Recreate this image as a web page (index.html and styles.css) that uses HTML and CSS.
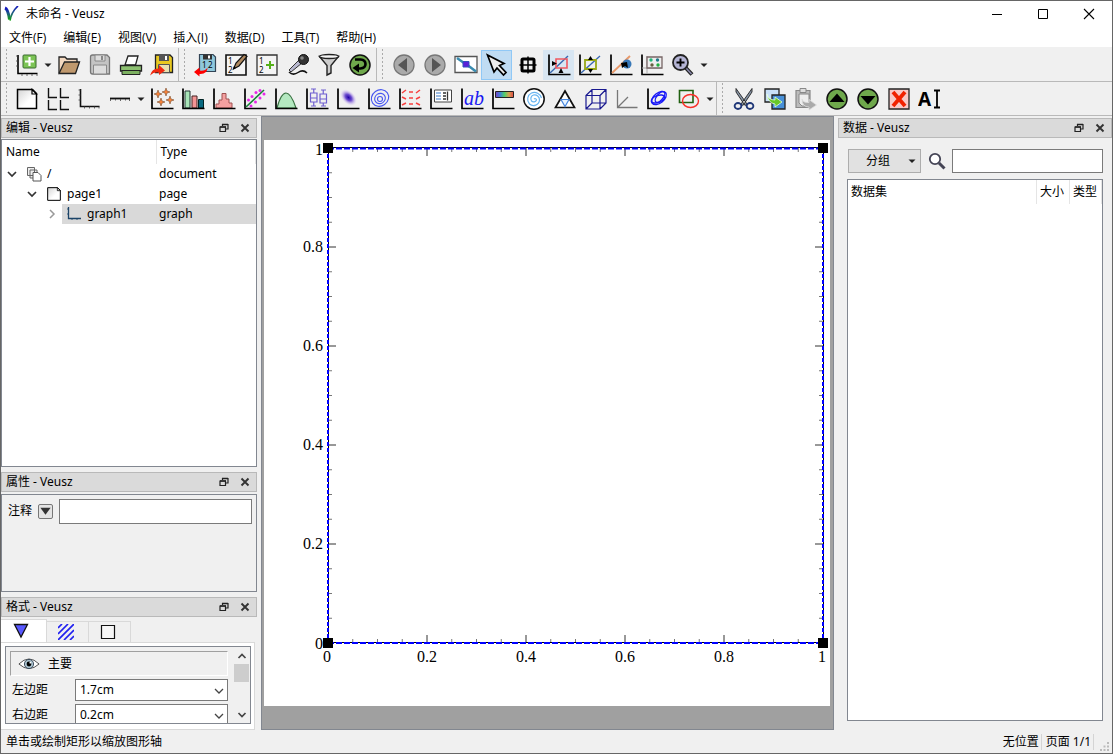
FILE: index.html
```html
<!DOCTYPE html>
<html lang="zh-CN">
<head>
<meta charset="utf-8">
<title>未命名 - Veusz</title>
<link rel="stylesheet" href="styles.css">
</head>
<body>
<svg class="defs" aria-hidden="true">
  <defs>
    <linearGradient id="spectrum"><stop offset="0" stop-color="#7a3fc0"/><stop offset=".25" stop-color="#3f7fd8"/><stop offset=".5" stop-color="#4fd06a"/><stop offset=".75" stop-color="#d8a050"/><stop offset="1" stop-color="#e04848"/></linearGradient>
    <linearGradient id="paper" x1="0" y1="0" x2="1" y2="1"><stop offset="0" stop-color="#d4d4d4"/><stop offset=".6" stop-color="#fff"/></linearGradient>
    <linearGradient id="logo" x1="0" y1="0" x2="0" y2="1"><stop offset="0" stop-color="#1010c0"/><stop offset=".5" stop-color="#206080"/><stop offset="1" stop-color="#10a010"/></linearGradient>
    <radialGradient id="blob"><stop offset="0" stop-color="#2200a8"/><stop offset=".4" stop-color="#7050d0"/><stop offset="1" stop-color="#e8d8f8" stop-opacity="0"/></radialGradient>
    <symbol id="axes" viewBox="0 0 24 24"><path d="M2 1.500V21.500H23.500" fill="none" stroke="#000" stroke-width="1.700"/></symbol>
    <symbol id="float" viewBox="0 0 10 10"><path d="M3.500 3V1.500H9V6H7M1 4H6.500V8.500H1Z" fill="none" stroke="#222" stroke-width="1.200"/><path d="M1 4h6M3 1.500h6" stroke="#222" stroke-width="1.500"/></symbol>
    <symbol id="close" viewBox="0 0 10 10"><path d="M1.500 1.500L8.500 8.500M8.500 1.500L1.500 8.500" stroke="#333" stroke-width="1.900"/></symbol>
    <symbol id="chev" viewBox="0 0 10 10"><path d="M1 3l4 4 4-4" fill="none" stroke="currentColor" stroke-width="1.300"/></symbol>
    <symbol id="down" viewBox="0 0 10 10"><path d="M1.500 3.500h7L5 7Z" fill="#222"/></symbol>
    <symbol id="page" viewBox="0 0 24 24"><path d="M2.500 2.500H17.500L21.500 6.500V21.500H2.500Z" fill="url(#paper)" stroke="#000" stroke-width="1.500"/><path d="M17 2.500V7H21.500Z" fill="#fff" stroke="#000" stroke-width="1.200"/></symbol>
  </defs>
</svg>
<div class="window">
  <header class="titlebar">
    <svg class="logo" viewBox="0 0 16 16"><path d="M1 2Q4 3 5.500 13.500" fill="none" stroke="url(#logo)" stroke-width="3"/><path d="M6 14.500Q7.500 6 14 0" fill="none" stroke="url(#logo)" stroke-width="1.700"/></svg>
    <h1>未命名 - Veusz</h1>
    <div class="caption">
      <button aria-label="最小化"><svg viewBox="0 0 12 12"><path d="M1 6.500H11" stroke="#000"/></svg></button>
      <button aria-label="最大化"><svg viewBox="0 0 12 12"><path d="M1.500 1.500H10.500V10.500H1.500Z" fill="none" stroke="#000"/></svg></button>
      <button aria-label="关闭"><svg viewBox="0 0 12 12"><path d="M1 1L11 11M11 1L1 11" stroke="#000" stroke-width="1.100"/></svg></button>
    </div>
  </header>
  <nav class="menubar">
    <button>文件(F)</button><button>编辑(E)</button><button>视图(V)</button><button>插入(I)</button><button>数据(D)</button><button>工具(T)</button><button>帮助(H)</button>
  </nav>

  <div class="toolrow">
    <div class="tools">
      <button class="tool" aria-label="新建"><svg viewBox="0 0 24 24"><path d="M3 2V20.500H22.500" fill="none" stroke="#000" stroke-width="1.600"/><path d="M1 3h2M1 8h2M1 13h2M7 21v2M12 21v2M17 21v2M22 21v2" stroke="#444" stroke-width=".8"/><rect x="8" y="2" width="13" height="13" rx="1" fill="#7cc455" stroke="#3a6a30"/><path d="M14.500 4v9M10 8.500h9" stroke="#fff" stroke-width="2.200"/></svg></button>
      <button class="drop" aria-label="新建选项"><svg viewBox="0 0 10 10"><use href="#down"/></svg></button>
      <button class="tool" aria-label="打开"><svg viewBox="0 0 24 24"><path d="M2 20V4H8L10 6H20V9" fill="#f4d9c0" stroke="#222" stroke-width="1.300"/><path d="M2 20.500L7.500 9H22.500L18.500 20.500Z" fill="#c0996e" stroke="#222" stroke-width="1.300"/></svg></button>
      <button class="tool" aria-label="保存"><svg viewBox="0 0 24 24"><path d="M2.500 4Q2.500 2 4.500 2H19L21.500 4.500V21H4.500Q2.500 21 2.500 19Z" fill="#c4c4c4" stroke="#777" stroke-width="1.300"/><path d="M7 2h10v6H7ZM5.500 12h13v9h-13Z" fill="#ddd" stroke="#888"/><path d="M13 3h2v4h-2Z" fill="#888"/></svg></button>
      <button class="tool" aria-label="打印"><svg viewBox="0 0 24 24"><path d="M6 12L9 3H19L16.500 12Z" fill="#fff" stroke="#222" stroke-width="1.300"/><path d="M1.500 12.500H22.500V18H1.500Z" fill="#8cc070" stroke="#222" stroke-width="1.300"/><path d="M3 17.500h18v4H3Z" fill="#7cb060" stroke="#222"/></svg></button>
      <button class="tool" aria-label="导出"><svg viewBox="0 0 24 24"><path d="M5.500 2H20L22.500 4.500V19.500H5.500Z" fill="#e8c820" stroke="#222" stroke-width="1.300"/><path d="M9 2h10v6H9Z" fill="#555"/><path d="M15 3h2v4h-2Z" fill="#fff"/><path d="M8.500 11.500h11v8h-11Z" fill="#e8e0b0" stroke="#555"/><path d="M0 22.500Q2 15 9 15.500V12L15 17.500L9 22V19.500Q4 18.500 0 22.500Z" fill="#f02810"/></svg></button>
    </div>
    <div class="tools">
      <button class="tool" aria-label="链接数据"><svg viewBox="0 0 24 24"><path d="M6.500 1.500H20L22.500 4V18.500H6.500Z" fill="#8fc8dc" stroke="#345" stroke-width="1.200"/><path d="M10 1.500h9v5h-9Z" fill="#333"/><path d="M15 2.500h2v3h-2Z" fill="#fff"/><text x="9" y="15" font-size="8">1</text><text x="15" y="15" font-size="8">2</text><path d="M1 19L6.500 14.500V17.500Q12 18.500 14.500 14.500Q14.500 21.500 6.500 21V23.500Z" fill="#f00"/></svg></button>
      <button class="tool" aria-label="编辑数据"><svg viewBox="0 0 24 24"><path d="M2 2h20v20H2Z" fill="#f4f4f4" stroke="#111" stroke-width="1.600"/><text x="4" y="11" font-size="8">1</text><text x="4" y="20" font-size="8">2</text><path d="M9.500 16L12 10L20 1.500L23 3.500L15 13Z" fill="#b08a60" stroke="#111" stroke-width="1.200"/><path d="M9 16.500l3-1.500-2-2Z"/></svg></button>
      <button class="tool" aria-label="创建数据"><svg viewBox="0 0 24 24"><path d="M2 2h20v20H2Z" fill="#f4f4f4" stroke="#333" stroke-width="1.300"/><text x="4" y="10.500" font-size="8">1</text><text x="4" y="19.500" font-size="8">2</text><path d="M15 8v8M11 12h8" stroke="#54b018" stroke-width="2"/></svg></button>
      <button class="tool" aria-label="捕获数据"><svg viewBox="0 0 24 24"><path d="M3 17L13 7L16 10L5 19Z" fill="#b8b8d0" stroke="#333"/><circle cx="17.500" cy="6.500" r="5" fill="#333" stroke="#111"/><circle cx="16" cy="5" r="1.800" fill="#888"/><path d="M3 19Q7 23 12 19.500T21 20" fill="none" stroke="#111" stroke-width="1.500"/></svg></button>
      <button class="tool" aria-label="筛选数据"><svg viewBox="0 0 24 24"><path d="M2.500 3.500L10 12.500V22L14 20V12.500L21.500 3.500Z" fill="#ccc" stroke="#222" stroke-width="1.400"/><ellipse cx="12" cy="3.500" rx="9.500" ry="2" fill="#f6f6f6" stroke="#222" stroke-width="1.300"/></svg></button>
      <button class="tool" aria-label="重新加载"><svg viewBox="0 0 24 24"><circle cx="12" cy="12" r="10" fill="#6fa84c" stroke="#111" stroke-width="1.500"/><path d="M7 6.500H12.500Q17.500 7 17.500 11T12.500 15.500H10" fill="none" stroke="#000" stroke-width="2.600"/><path d="M4.500 15L11 10.500V19.500Z"/></svg></button>
    </div>
    <div class="tools last">
      <button class="tool" aria-label="上一页"><svg viewBox="0 0 24 24"><circle cx="12" cy="12" r="10" fill="#aaa" stroke="#777" stroke-width="1.300"/><path d="M15 5V19L6 12Z" fill="#555"/></svg></button>
      <button class="tool" aria-label="下一页"><svg viewBox="0 0 24 24"><circle cx="12" cy="12" r="10" fill="#aaa" stroke="#777" stroke-width="1.300"/><path d="M9 5V19L18 12Z" fill="#555"/></svg></button>
      <button class="tool" aria-label="全屏"><svg viewBox="0 0 24 24"><path d="M1 3.500h22v16H1Z" fill="#fff" stroke="#555" stroke-width="1.300"/><path d="M3 5l7 5M14 12.500l8 6" stroke="#3a8cb0" stroke-width="2.500"/><path d="M9 8.500h6v5.500H9Z" fill="#5a20d8" stroke="#3050c0"/></svg></button>
      <button class="tool on" aria-label="选择"><svg viewBox="0 0 24 24"><path d="M2.500 2L19 10.500L14.500 12.500L21 19.500L18.500 22L12 15L9 19Z" fill="#eee" stroke="#000" stroke-width="1.700"/></svg></button>
      <button class="tool" aria-label="读取坐标"><svg viewBox="0 0 24 24"><rect x="6" y="6" width="12" height="12" rx="1" fill="none" stroke="#000" stroke-width="3"/><path d="M12 3.500v17M3.500 12h17" stroke="#000" stroke-width="1.500"/></svg></button>
      <button class="tool soft" aria-label="缩放坐标轴"><svg viewBox="0 0 24 24"><use href="#axes"/><path d="M3 20L21 3" stroke="#3868b0" stroke-width="1.400"/><path d="M9 6h11v9H9Z" fill="none" stroke="#f05860" stroke-width="1.600"/><path d="M5 8l5 2.500-5 2.500ZM14 15l2.500 5h-5Z"/></svg></button>
      <button class="tool" aria-label="重新居中"><svg viewBox="0 0 24 24"><use href="#axes"/><path d="M3 20L22 3" stroke="#3868b0" stroke-width="1.400"/><path d="M7 7h11v9H7Z" fill="none" stroke="#98a818" stroke-width="1.800"/><path d="M12.500 3l2.500 4h-5ZM12.500 20l2.500-4h-5Z"/></svg></button>
      <button class="tool" aria-label="移动"><svg viewBox="0 0 24 24"><use href="#axes"/><path d="M3 20L21 3" stroke="#e89868" stroke-width="1.800"/><circle cx="18" cy="11" r="4.500" fill="#3878b8"/><path d="M12 10l6-1 1 6-3-2-3 2Z"/></svg></button>
      <button class="tool" aria-label="重置"><svg viewBox="0 0 24 24"><use href="#axes"/><path d="M2 15H22M7 3V21" stroke="#aaa"/><path d="M7 4h15v11H7Z" fill="#eee" stroke="#766" stroke-width="1.300"/><circle cx="11" cy="7" r="1.700" fill="#20b878"/><circle cx="17.500" cy="7" r="1.700" fill="#20788a"/><circle cx="12" cy="12" r="1.700" fill="#686040"/><circle cx="18" cy="12" r="1.700" fill="#20b040"/></svg></button>
      <button class="tool" aria-label="放大"><svg viewBox="0 0 24 24"><path d="M14 14L21 21.500" stroke="#222" stroke-width="4"/><path d="M15 15L20.500 21" stroke="#88a" stroke-width="1.600"/><circle cx="9.500" cy="9.500" r="7.500" fill="#b4b4d4" stroke="#222" stroke-width="1.800"/><path d="M9.500 5.500v8M5.500 9.500h8" stroke="#000" stroke-width="1.900"/></svg></button>
      <button class="drop" aria-label="缩放选项"><svg viewBox="0 0 10 10"><use href="#down"/></svg></button>
    </div>
  </div>

  <div class="toolrow">
    <div class="tools">
      <button class="tool" aria-label="页面"><svg viewBox="0 0 24 24"><use href="#page"/></svg></button>
      <button class="tool" aria-label="网格"><svg viewBox="0 0 24 24"><path d="M2.500 1V10.500H11M14.500 1V10.500H23M2.500 13V22.500H11M14.500 13V22.500H23" fill="none" stroke="#111" stroke-width="1.400"/></svg></button>
      <button class="tool" aria-label="图形"><svg viewBox="0 0 24 24"><path d="M3.500 2V19.500H22.500" fill="none" stroke="#111" stroke-width="1.600"/><path d="M1.500 3h2M1.500 8h2M1.500 13h2M7.500 19.500v2M12.500 19.500v2M17.500 19.500v2M22 19.500v2" stroke="#444" stroke-width=".8"/></svg></button>
      <button class="tool" aria-label="坐标轴"><svg viewBox="0 0 24 24"><path d="M2 11.500H22" stroke="#111" stroke-width="1.800"/><path d="M2.500 12v2M7.500 12v1.500M12.500 12v2M17.500 12v1.500M21.500 12v2" stroke="#444" stroke-width=".8"/></svg></button>
      <button class="drop" aria-label="坐标轴选项"><svg viewBox="0 0 10 10"><use href="#down"/></svg></button>
      <button class="tool" aria-label="散点"><svg viewBox="0 0 24 24"><use href="#axes"/><g fill="#f88038" stroke="#7a5030" stroke-width=".6"><path id="star" d="M8 3l1 3 3 1-3 1-1 3-1-3-3-1 3-1Z"/><use href="#star" x="8" y="-2"/><use href="#star" x="3" y="8"/><use href="#star" x="12" y="6"/></g></svg></button>
      <button class="tool" aria-label="柱形图"><svg viewBox="0 0 24 24"><path d="M4 4h5v17H4Z" fill="#a8e4b8" stroke="#233"/><path d="M11 9h5v12h-5Z" fill="#f49494" stroke="#422"/><path d="M17.500 12.500h5V21h-5Z" fill="#086880" stroke="#022"/><use href="#axes"/></svg></button>
      <button class="tool" aria-label="直方图"><svg viewBox="0 0 24 24"><path d="M4 21V17H7V13H10V6.500H14V12H17V16H20V21Z" fill="#f4a0a0" stroke="#a05050"/><use href="#axes"/></svg></button>
      <button class="tool" aria-label="拟合"><svg viewBox="0 0 24 24"><use href="#axes"/><path d="M3 20L21 3" stroke="#188038" stroke-width="1.600"/><g fill="#e828e8"><circle cx="5.500" cy="13" r="1.500"/><circle cx="9" cy="9.500" r="1.500"/><circle cx="13" cy="5.500" r="1.500"/><circle cx="17" cy="3.500" r="1.500"/><circle cx="8" cy="19" r="1.500"/><circle cx="12.500" cy="15" r="1.500"/><circle cx="17" cy="11" r="1.500"/><circle cx="21" cy="7" r="1.500"/></g></svg></button>
      <button class="tool" aria-label="函数"><svg viewBox="0 0 24 24"><path d="M3 21Q7 6 12 6T22 21Z" fill="#b4e8c0" stroke="#387040" stroke-width="1.200"/><use href="#axes"/></svg></button>
      <button class="tool" aria-label="箱线图"><svg viewBox="0 0 24 24"><use href="#axes"/><path d="M5.500 6h6.500v9H5.500ZM15 7h6.500v9H15ZM8.750 2v4M8.750 15v4M18.250 3v4M18.250 16v3M6 2h5M6 19h5M16 3h5M16 19h5M5.500 11H12M15 12h6.500" fill="none" stroke="#7060d0" stroke-width="1.200"/></svg></button>
      <button class="tool" aria-label="图像"><svg viewBox="0 0 24 24"><use href="#axes"/><ellipse cx="12.500" cy="10.500" rx="10" ry="6.500" fill="url(#blob)" transform="rotate(45 12.500 10.500)"/></svg></button>
      <button class="tool" aria-label="等高线"><svg viewBox="0 0 24 24"><use href="#axes"/><g fill="none" stroke="#4858f0" stroke-width="1.100"><ellipse cx="13" cy="11" rx="9" ry="8" transform="rotate(-35 13 11)"/><ellipse cx="13" cy="11.500" rx="5.500" ry="5" transform="rotate(-35 13 11.500)"/><circle cx="13" cy="12" r="2.500"/></g></svg></button>
      <button class="tool" aria-label="矢量场"><svg viewBox="0 0 24 24"><use href="#axes"/><path d="M4 6l4-3M11 5h4M18 6l4-3M4 10l4 2M11 11h4M18 12l4-2M4 18l4-2M11 17h4M18 16l4 2" stroke="#f84040" stroke-width="1.500"/></svg></button>
      <button class="tool" aria-label="图例"><svg viewBox="0 0 24 24"><use href="#axes"/><path d="M5.500 3h17v12h-17Z" fill="#fff" stroke="#444"/><path d="M7 6h5M7 9h5M7 12h5" stroke="#3878c8"/><path d="M14 6h3M14 9h3M14 12h3M18.500 4.500v9" stroke="#333" stroke-width="1.300"/></svg></button>
      <button class="tool" aria-label="标签"><svg viewBox="0 0 24 24"><use href="#axes"/><text class="ab" x="4" y="18" font-size="20">ab</text></svg></button>
      <button class="tool" aria-label="色条"><svg viewBox="0 0 24 24"><use href="#axes"/><path d="M4.500 4.500h18v6h-18Z" fill="url(#spectrum)" stroke="#222"/></svg></button>
      <button class="tool" aria-label="极坐标"><svg viewBox="0 0 24 24"><circle cx="12" cy="12" r="10.200" fill="#fff" stroke="#111" stroke-width="1.500"/><path d="M12 12a1.500 1.500 0 0 1 2.500 1a3 3 0 0 1-5 1a4 4 0 0 1 2-6a5 5 0 0 1 6 5a6 6 0 0 1-10 4a7 7 0 0 1 2-11a7.500 7.500 0 0 1 10 5" fill="none" stroke="#68b4f0" stroke-width="1.200"/></svg></button>
      <button class="tool" aria-label="三元图"><svg viewBox="0 0 24 24"><path d="M12 4L21.500 20.500H2.500Z" fill="#fff" stroke="#111" stroke-width="1.700"/><path d="M8 12.500h8L12 19.500Z" fill="#e8f4ff" stroke="#4888e0" stroke-width="1.200"/></svg></button>
      <button class="tool" aria-label="三维场景"><svg viewBox="0 0 24 24"><path d="M2 8.500H16V22H2ZM2 8.500L8 2.500H22V16L16 22M16 8.500L22 2.500M8 2.500V16H22M8 16L2 22" fill="none" stroke="#181890" stroke-width="1.200"/></svg></button>
      <button class="tool" aria-label="三维图形"><svg viewBox="0 0 24 24"><path d="M2.500 3V20.500H22.500M2.500 20.500L13 10" fill="none" stroke="#777" stroke-width="1.300"/></svg></button>
      <button class="tool" aria-label="协方差"><svg viewBox="0 0 24 24"><use href="#axes"/><g fill="none" stroke="#1818f8" stroke-width="1.400"><ellipse cx="13" cy="11" rx="8.500" ry="5" transform="rotate(-38 13 11)"/><ellipse cx="14" cy="10" rx="6.500" ry="3" transform="rotate(-50 14 10)"/><ellipse cx="12" cy="12" rx="7" ry="3.500" transform="rotate(-20 12 12)"/></g></svg></button>
      <button class="tool" aria-label="形状"><svg viewBox="0 0 24 24"><path d="M2.500 3.500H16V15.500H2.500Z" fill="none" stroke="#206010" stroke-width="1.600"/><ellipse cx="13.500" cy="14" rx="8" ry="6.500" fill="none" stroke="#f83028" stroke-width="1.400"/></svg></button>
      <button class="drop" aria-label="形状选项"><svg viewBox="0 0 10 10"><use href="#down"/></svg></button>
    </div>
    <div class="tools last">
      <button class="tool" aria-label="剪切"><svg viewBox="0 0 24 24"><path d="M4 1.500L15 17L13 18.500L4 5ZM20 1.500L9 17L11 18.500L20 5Z" fill="#8896a8" stroke="#222" stroke-width=".9"/><ellipse cx="6" cy="19" rx="3.400" ry="3" fill="none" stroke="#203878" stroke-width="1.800"/><ellipse cx="18" cy="19" rx="3.400" ry="3" fill="none" stroke="#203878" stroke-width="1.800"/></svg></button>
      <button class="tool" aria-label="复制"><svg viewBox="0 0 24 24"><path d="M2 2h14v13H2Z" fill="#c8e0f8" stroke="#222" stroke-width="1.300"/><path d="M9 8h13v14H9Z" fill="#4890d8" stroke="#222" stroke-width="1.300"/><path d="M4 7Q5 13 12 13V10L19 15L12 20V17Q5 16 4 7Z" fill="#68c828" stroke="#e8ffe0" stroke-width=".8"/></svg></button>
      <button class="tool" aria-label="粘贴"><svg viewBox="0 0 24 24"><path d="M2 3.500h14v17H2Z" fill="#bbb" stroke="#888" stroke-width="1.200"/><path d="M6 1.500h6v4H6Z" fill="#ddd" stroke="#888"/><path d="M5 7h10v12H8L5 16Z" fill="#eee" stroke="#888"/><path d="M8 12Q9 16 15 15.500V12.500L22.500 18L15 23V20Q8 20 8 12Z" fill="#aaa" stroke="#ddd" stroke-width=".8"/></svg></button>
      <button class="tool" aria-label="上移"><svg viewBox="0 0 24 24"><circle cx="12" cy="12" r="10" fill="#6fa84c" stroke="#111" stroke-width="1.500"/><path d="M12 6.500L19.500 15H4.500Z"/></svg></button>
      <button class="tool" aria-label="下移"><svg viewBox="0 0 24 24"><circle cx="12" cy="12" r="10" fill="#6fa84c" stroke="#111" stroke-width="1.500"/><path d="M12 17.500L19.500 9H4.500Z"/></svg></button>
      <button class="tool" aria-label="删除"><svg viewBox="0 0 24 24"><path d="M2 2h20v20H2Z" fill="#f8c8c8" stroke="#222" stroke-width="1.300"/><path d="M6 5L18 19M18 5L6 19" stroke="#f02000" stroke-width="3.800"/></svg></button>
      <button class="tool" aria-label="重命名"><svg viewBox="0 0 24 24"><text class="ai" x="0" y="19" font-size="19">A</text><path d="M16 3.500H22M16 20.500H22M19 3.500V20.500" stroke="#000" stroke-width="1.800"/></svg></button>
    </div>
  </div>

  <div class="work">
    <aside class="left">
      <div class="dockbar"><h2>编辑 - Veusz</h2><button aria-label="浮动"><svg viewBox="0 0 10 10"><use href="#float"/></svg></button><button aria-label="关闭"><svg viewBox="0 0 10 10"><use href="#close"/></svg></button></div>
      <div class="frame tree">
        <table>
          <thead><tr><th class="name">Name</th><th>Type</th></tr></thead>
          <tbody>
            <tr><td><div class="node"><svg class="twist" viewBox="0 0 10 10"><path d="M1 3l4 4 4-4" fill="none" stroke="#333" stroke-width="1.700"/></svg><span class="label"><svg viewBox="0 0 16 16"><path d="M1.500 1.500h7v8h-7ZM4 4h7v8H4Z" fill="#eee" stroke="#666"/><path d="M7 6.500h5l3 3v5.500H7Z" fill="#fff" stroke="#555"/></svg>/</span></div></td><td>document</td></tr>
            <tr><td><div class="node l1"><svg class="twist" viewBox="0 0 10 10"><path d="M1 3l4 4 4-4" fill="none" stroke="#333" stroke-width="1.700"/></svg><span class="label"><svg viewBox="0 0 24 24"><use href="#page"/></svg>page1</span></div></td><td>page</td></tr>
            <tr class="sel"><td><div class="node l2"><svg class="twist" viewBox="0 0 10 10"><path d="M3 1l4 4-4 4" fill="none" stroke="#999" stroke-width="1.500"/></svg><span class="label"><svg viewBox="0 0 16 16"><path d="M2.500 1V12.500H15" fill="none" stroke="#1c4468" stroke-width="1.300"/><path d="M1 3h1M1 8h1M6 13v1M11 13v1" stroke="#1c4468" stroke-width=".8"/></svg>graph1</span></div></td><td>graph</td></tr>
          </tbody>
        </table>
      </div>
      <div class="dockbar"><h2>属性 - Veusz</h2><button aria-label="浮动"><svg viewBox="0 0 10 10"><use href="#float"/></svg></button><button aria-label="关闭"><svg viewBox="0 0 10 10"><use href="#close"/></svg></button></div>
      <div class="frame props">
        <label for="notes">注释</label>
        <button class="mini" aria-label="注释选项"><svg viewBox="0 0 14 14"><path d="M1.500 3H12.500L7 10.500Z" fill="#333"/></svg></button>
        <input id="notes" type="text">
      </div>
      <div class="dockbar"><h2>格式 - Veusz</h2><button aria-label="浮动"><svg viewBox="0 0 10 10"><use href="#float"/></svg></button><button aria-label="关闭"><svg viewBox="0 0 10 10"><use href="#close"/></svg></button></div>
      <div class="tabs">
        <button class="active" aria-label="主要"><svg viewBox="0 0 16 16"><path d="M1.500 1.500H14.500L8 14Z" fill="#5858ff" stroke="#111" stroke-width="1.300"/></svg></button>
        <button aria-label="背景"><svg viewBox="0 0 16 16"><path d="M0 4L4 0M0 10L10 0M0 16L16 0M6 16L16 6M12 16L16 12" stroke="#2020f0" stroke-width="1.700"/></svg></button>
        <button aria-label="边框"><svg viewBox="0 0 16 16"><path d="M1.500 1.500h13v13h-13Z" fill="#f6f6f6" stroke="#111" stroke-width="1.200"/></svg></button>
      </div>
      <div class="tabpanel">
        <div class="frame scroller">
          <div class="settings">
            <div class="section"><svg viewBox="0 0 24 14"><path d="M1 7Q12 -4 23 7Q12 17 1 7Z" fill="#fff" stroke="#444"/><circle cx="12" cy="7" r="5" fill="#a8c0cc" stroke="#345"/><circle cx="12" cy="7" r="2.600"/><circle cx="13.500" cy="5.500" r="1" fill="#fff"/></svg>主要</div>
            <div class="field"><label for="lm">左边距</label><span class="combo"><select id="lm"><option>1.7cm</option></select><svg viewBox="0 0 10 10"><use href="#chev"/></svg></span></div>
            <div class="field"><label for="rm">右边距</label><span class="combo"><select id="rm"><option>0.2cm</option></select><svg viewBox="0 0 10 10"><use href="#chev"/></svg></span></div>
          </div>
          <div class="scrollbar">
            <button aria-label="向上"><svg viewBox="0 0 10 10"><path d="M1.500 7L5 3.500 8.500 7" fill="none" stroke="#444" stroke-width="1.700"/></svg></button>
            <span class="thumb"></span>
            <button aria-label="向下"><svg viewBox="0 0 10 10"><path d="M1.500 3L5 6.500 8.500 3" fill="none" stroke="#444" stroke-width="1.700"/></svg></button>
          </div>
        </div>
      </div>
    </aside>

    <main class="canvas">
      <svg class="sheet" viewBox="0 0 566 566">
        <defs>
          <path id="minor" d="M24.750 0v4M49.500 0v4M74.250 0v4M123.750 0v4M148.500 0v4M173.250 0v4M222.750 0v4M247.500 0v4M272.250 0v4M321.750 0v4M346.500 0v4M371.250 0v4M420.750 0v4M445.500 0v4M470.250 0v4" stroke="#777"/>
          <path id="major" d="M99 0v8M198 0v8M297 0v8M396 0v8" stroke="#333"/>
          <g id="ticks"><use href="#minor"/><use href="#major"/></g>
        </defs>
        <rect width="566" height="566" fill="#fff"/>
        <use href="#ticks" transform="translate(64 8)"/>
        <use href="#ticks" transform="translate(64 503) scale(1 -1)"/>
        <use href="#ticks" transform="translate(64 503) rotate(-90)"/>
        <use href="#ticks" transform="translate(559 503) rotate(-90) scale(1 -1)"/>
        <path d="M64.500 7.500H559.500V502.500H64.500Z" fill="none" stroke="#000"/>
        <path d="M64 8.500H559M64 503H559" stroke="#00f" stroke-width="2" stroke-dasharray="6 2"/>
        <path d="M64 8V503M559 8V503" stroke="#00f" stroke-width="2" stroke-dasharray="4 2"/>
        <path d="M59 3h10v10H59ZM554 3h10v10h-10ZM59 498h10v10H59ZM554 498h10v10h-10Z"/>
        <g class="ylab"><text x="59" y="15">1</text><text x="59" y="112">0.8</text><text x="59" y="211">0.6</text><text x="59" y="310">0.4</text><text x="59" y="409">0.2</text><text x="59" y="509">0</text></g>
        <g class="xlab"><text x="63" y="522">0</text><text x="163" y="522">0.2</text><text x="262" y="522">0.4</text><text x="361" y="522">0.6</text><text x="460" y="522">0.8</text><text x="558" y="522">1</text></g>
      </svg>
    </main>

    <aside class="right">
      <div class="dockbar"><h2>数据 - Veusz</h2><button aria-label="浮动"><svg viewBox="0 0 10 10"><use href="#float"/></svg></button><button aria-label="关闭"><svg viewBox="0 0 10 10"><use href="#close"/></svg></button></div>
      <div class="search">
        <button class="group">分组<svg viewBox="0 0 10 10"><use href="#down"/></svg></button>
        <label for="find" aria-label="搜索"><svg viewBox="0 0 18 18"><path d="M11 11L16.500 16.500" stroke="#445" stroke-width="3"/><circle cx="7" cy="7" r="5.200" fill="#fff" stroke="#445" stroke-width="1.800"/></svg></label>
        <input id="find" type="text">
      </div>
      <div class="frame data">
        <table><thead><tr><th>数据集</th><th class="size">大小</th><th class="kind">类型</th></tr></thead></table>
      </div>
    </aside>
  </div>

  <footer class="status">
    <span class="hint">单击或绘制矩形以缩放图形轴</span><span class="cell">无位置</span><span class="cell">页面 1/1</span>
    <svg class="grip" viewBox="0 0 10 10"><path d="M7 0h2v2H7ZM7 3.500h2v2H7ZM3.500 3.500h2v2h-2ZM7 7h2v2H7ZM3.500 7h2v2h-2ZM0 7h2v2H0Z" fill="#bbb"/></svg>
  </footer>
</div>
</body>
</html>
```

FILE: styles.css
```css
* { box-sizing: border-box; }
body { margin: 0; font: 12px/16px "Noto Sans", "Noto Sans CJK SC", sans-serif; color: #000; }
button, input, select { font: inherit; color: inherit; }
button { border: 0; padding: 0; background: none; }
h1, h2 { margin: 0; font-size: 12px; font-weight: 400; }
svg { display: block; flex: none; }
.defs { position: absolute; width: 0; height: 0; }

.window { display: flex; flex-direction: column; height: 100vh; border: 1px solid #666; background: #f0f0f0; overflow: hidden; }

.titlebar { display: flex; align-items: center; height: 26px; padding-left: 3px; background: #fff; }
.logo { width: 16px; height: 16px; margin-right: 6px; }
.caption { display: flex; margin-left: auto; }
.caption button { display: grid; place-items: center; width: 46px; height: 24px; }
.caption svg { width: 12px; height: 12px; }

.menubar { display: flex; gap: 1px; height: 21px; padding-top: 1px; background: #fff; border-bottom: 1px solid #f0f0f0; font-family: "Open Sans", "Noto Sans CJK SC", sans-serif; }
.menubar button { padding: 0 8px; }

.toolrow { display: flex; height: 34px; border-bottom: 1px solid #b9b9b9; }
.tools { display: flex; align-items: center; padding: 0 1px 0 10px; border-right: 1px solid #b9b9b9; background: radial-gradient(circle, #aaa 1px, transparent 1px) 4px 4px / 3px 4px repeat-y; }
.tools.last { padding-left: 11px; border-right: 0; }
.tool { display: grid; place-items: center; width: 31px; height: 30px; }
.tool svg { width: 24px; height: 24px; }
.tool.on { background: #c0dcf3; border: 1px solid #90c8f6; }
.tool.soft { background: #d8e6f2; }
.tool text { font-family: "Noto Sans", sans-serif; }
.tool .ab { font-family: "Liberation Serif", serif; font-style: italic; fill: #1818f0; }
.tool .ai { font-weight: 700; }
.drop { display: grid; place-items: center; width: 11px; height: 30px; }
.drop svg { width: 10px; height: 10px; }

.work { display: grid; grid-template-columns: 256px minmax(0, 1fr) 274px; column-gap: 4px; flex: 1; min-height: 0; }
.left, .right { display: flex; flex-direction: column; min-height: 0; padding-top: 2px; }
.dockbar { display: flex; align-items: center; flex: none; height: 20px; padding: 0 6px 0 4px; border: 1px solid #b9b9b9; background: #dadada; }
.dockbar h2 { flex: 1; }
.dockbar button { margin-left: 11px; }
.dockbar svg { width: 10px; height: 10px; }
.frame { border: 1px solid #828790; }

table { width: 100%; border-collapse: collapse; table-layout: fixed; }
th { font-weight: 400; text-align: left; height: 24px; padding: 0 4px; border-right: 1px solid #e5e5e5; }
.tree { flex: 1; min-height: 0; margin: 1px 0 5px; background: #fff; }
.tree .name { width: 154px; }
.tree td { height: 20px; padding: 0 3px; }
.tree td:first-child { padding: 0; }
.node { display: flex; align-items: center; height: 20px; padding-left: 5px; gap: 5px; }
.node.l1 { padding-left: 25px; }
.node.l2 { padding-left: 45px; }
.twist { width: 10px; height: 10px; }
.label { display: flex; align-items: center; flex: 1; gap: 5px; height: 20px; padding-left: 4px; }
.label svg { width: 16px; height: 16px; }
.sel .label, .sel td:last-child { background: #d9d9d9; }

input { min-width: 0; height: 24px; padding: 0 4px; border: 1px solid #7a7a7a; background: #fff; }
.props { display: flex; flex: none; align-items: flex-start; height: 98px; margin: 2px 0 5px; padding: 4px; }
.props label { line-height: 24px; margin: 0 6px 0 2px; }
.props input { flex: 1; height: 25px; }
.mini { margin: 5px 6px 0 0; border: 1px solid #777; border-radius: 2px; background: #e4e4e4; }
.mini svg { width: 13px; height: 13px; }

.tabs { display: flex; align-items: flex-end; flex: none; margin-top: 2px; }
.tabs button { display: grid; place-items: center; width: 42px; height: 21px; padding-right: 3px; border: 1px solid #d9d9d9; border-width: 1px 1px 0 0; }
.tabs .active { width: 46px; height: 23px; padding-right: 6px; background: #fff; }
.tabs svg { width: 16px; height: 16px; }
.tabpanel { flex: none; height: 88px; margin-right: 2px; padding: 3px 3px 4px 4px; background: #fff; border: 1px solid #d9d9d9; border-left: 0; }
.scroller { display: flex; height: 78px; background: #f0f0f0; overflow: hidden; }
.settings { flex: 1; padding: 4px 5px 0 4px; }
.section { display: flex; align-items: center; gap: 8px; height: 25px; padding-left: 7px; margin-bottom: 3px; border: 1px solid #a0a0a0; border-color: #a0a0a0 #fff #fff #a0a0a0; }
.section svg { width: 22px; height: 14px; }
.field { display: flex; align-items: center; height: 22px; margin-bottom: 3px; }
.field label { width: 65px; padding-left: 2px; }
.combo { position: relative; flex: 1; }
.combo select { width: 100%; height: 22px; padding: 0 4px; appearance: none; border: 1px solid #7a7a7a; border-radius: 0; background: #fff; }
.combo svg { position: absolute; right: 4px; top: 7px; width: 10px; height: 10px; color: #444; }
.scrollbar { display: flex; flex-direction: column; flex: none; width: 17px; padding: 0 1px; }
.scrollbar button { display: grid; place-items: center; height: 17px; }
.scrollbar button:last-child { margin-top: auto; }
.scrollbar svg { width: 10px; height: 10px; }
.thumb { height: 18px; background: #cdcdcd; }

.canvas { min-width: 0; padding: 23px 3px 0 2px; background: #a0a0a0; border: 1px solid #828790; overflow: hidden; }
.sheet { width: 100%; height: auto; }
.sheet text { font: 16px "Liberation Serif", serif; }
.ylab { text-anchor: end; }
.xlab { text-anchor: middle; }

.search { display: flex; align-items: center; padding: 11px 9px 6px 10px; }
.group { display: flex; align-items: center; justify-content: flex-end; gap: 17px; width: 73px; height: 24px; padding-right: 3px; border: 1px solid #adadad; background: #e1e1e1; }
.group svg { width: 10px; height: 10px; }
.search label { margin: 0 6px 0 7px; }
.search label svg { width: 18px; height: 18px; }
.search input { flex: 1; }
.data { flex: 1; margin: 0 9px 9px; background: #fff; }
.data .size { width: 33px; }
.data .kind { width: 32px; }
.data th { padding: 0 3px; }

.status { display: flex; align-items: center; flex: none; height: 23px; padding: 0 2px 0 5px; }
.hint { flex: 1; }
.cell { padding: 0 2px 0 4px; border-right: 1px solid #d4d4d4; }
.grip { align-self: flex-end; width: 10px; height: 10px; margin: 0 0 1px 6px; }
```
